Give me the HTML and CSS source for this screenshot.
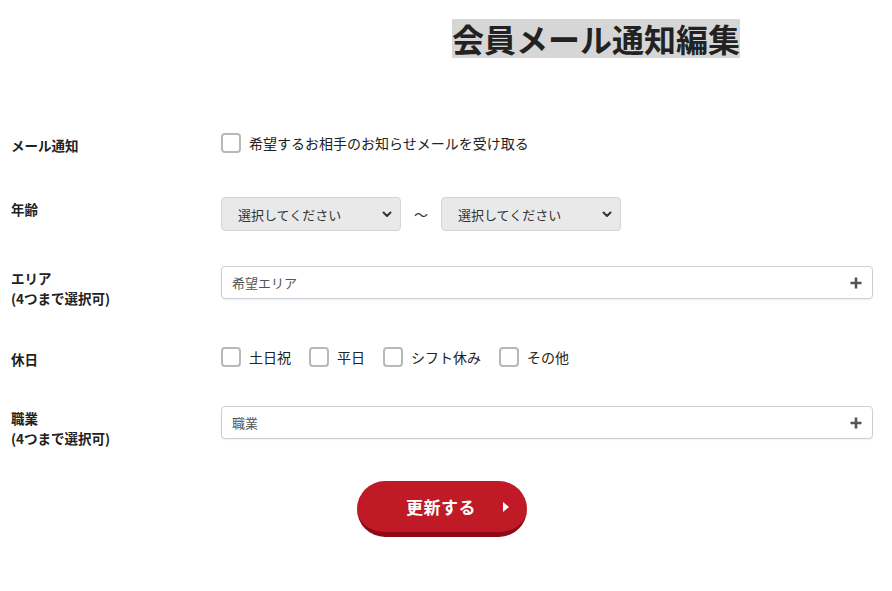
FILE: index.html
```html
<!DOCTYPE html>
<html lang="ja">
<head>
<meta charset="utf-8">
<title>会員メール通知編集</title>
<link rel="stylesheet" href="styles.css">
</head>
<body>
<div class="page">
  <header class="title-wrap">
    <h1 class="title">会員メール通知編集</h1>
  </header>

  <form class="form">
    <div class="row row-notice">
      <div class="label">メール通知</div>
      <div class="field">
        <label class="check"><span class="box"></span><span class="check-text">希望するお相手のお知らせメールを受け取る</span></label>
      </div>
    </div>

    <div class="row row-age">
      <div class="label">年齢</div>
      <div class="field field-age">
        <div class="select">
          <span>選択してください</span>
          <svg class="chev" width="10" height="7" viewBox="0 0 10 7"><path d="M1.5 1.5 L5 5 L8.5 1.5" fill="none" stroke="#333" stroke-width="2" stroke-linecap="round" stroke-linejoin="round"/></svg>
        </div>
        <span class="tilde">〜</span>
        <div class="select">
          <span>選択してください</span>
          <svg class="chev" width="10" height="7" viewBox="0 0 10 7"><path d="M1.5 1.5 L5 5 L8.5 1.5" fill="none" stroke="#333" stroke-width="2" stroke-linecap="round" stroke-linejoin="round"/></svg>
        </div>
      </div>
    </div>

    <div class="row row-area">
      <div class="label">エリア<br>(4つまで選択可)</div>
      <div class="field">
        <div class="picker">
          <span class="placeholder">希望エリア</span>
          <svg class="plus" width="12" height="12" viewBox="0 0 12 12"><path d="M6 0.5 V11.5 M0.5 6 H11.5" stroke="#555" stroke-width="2.6"/></svg>
        </div>
      </div>
    </div>

    <div class="row row-holiday">
      <div class="label">休日</div>
      <div class="field field-checks">
        <label class="check"><span class="box"></span><span class="check-text">土日祝</span></label>
        <label class="check"><span class="box"></span><span class="check-text">平日</span></label>
        <label class="check"><span class="box"></span><span class="check-text">シフト休み</span></label>
        <label class="check"><span class="box"></span><span class="check-text">その他</span></label>
      </div>
    </div>

    <div class="row row-job">
      <div class="label">職業<br>(4つまで選択可)</div>
      <div class="field">
        <div class="picker">
          <span class="placeholder">職業</span>
          <svg class="plus" width="12" height="12" viewBox="0 0 12 12"><path d="M6 0.5 V11.5 M0.5 6 H11.5" stroke="#555" stroke-width="2.6"/></svg>
        </div>
      </div>
    </div>

    <div class="actions">
      <button type="button" class="submit">
        <span class="submit-text">更新する</span>
        <svg class="arrow" width="6" height="10" viewBox="0 0 6 10"><path d="M0 0 L6 5 L0 10 Z" fill="#fff"/></svg>
      </button>
    </div>
  </form>
</div>
</body>
</html>
```
FILE: styles.css
```css
* { box-sizing: border-box; }

html, body {
  margin: 0;
  padding: 0;
  background: #fff;
}

body {
  font-family: "Noto Sans CJK JP", "Noto Sans", sans-serif;
  color: #222;
}

.page {
  width: 892px;
  padding: 0 19px 0 11px;
}

.title-wrap {
  padding-top: 19px;
  padding-left: 441px;
}

.title {
  display: inline-block;
  margin: 0;
  font-size: 32px;
  line-height: 39px;
  font-weight: 700;
  background: #d6d6d6;
  color: #222;
}

.form {
  margin-top: 75px;
  display: flex;
  flex-direction: column;
}

.row {
  display: grid;
  grid-template-columns: 210px 1fr;
  align-items: start;
}

.row-notice { margin-bottom: 42px; }
.row-age { margin-bottom: 35px; }
.row-area { margin-bottom: 39px; }
.row-holiday { margin-bottom: 37px; }
.row-job { margin-bottom: 33px; }

.label {
  padding-top: 2px;
  font-size: 13.5px;
  line-height: 20px;
  font-weight: 700;
  color: #222;
}

.field {
  display: flex;
  align-items: center;
}

.check {
  display: flex;
  align-items: center;
  gap: 8px;
  font-size: 14px;
  line-height: 20px;
  color: #222;
}

.box {
  width: 20px;
  height: 20px;
  border: 2px solid #b8b8b8;
  border-radius: 4px;
  background: #fff;
  flex: none;
}

.field-checks { gap: 18px; }

.field-age { gap: 0; }

.select {
  position: relative;
  width: 180px;
  height: 34px;
  background: #e9e9e9;
  border: 1px solid #d4d4d4;
  border-radius: 4px;
  padding-left: 16px;
  display: flex;
  align-items: center;
  font-size: 13px;
  color: #333;
}

.chev {
  position: absolute;
  right: 8px;
  top: 13px;
}

.tilde {
  width: 40px;
  text-align: center;
  font-size: 14px;
  color: #333;
}

.picker {
  flex: 1;
  height: 33px;
  border: 1px solid #cbd0d6;
  border-radius: 4px;
  background: #fff;
  display: flex;
  align-items: center;
  justify-content: space-between;
  padding: 0 10px;
  box-shadow: 0 1px 2px rgba(0,0,0,0.06);
}

.placeholder {
  font-size: 13px;
  color: #555;
}

.actions {
  display: flex;
  justify-content: center;
}

.submit {
  position: relative;
  width: 170px;
  height: 56px;
  border: none;
  border-bottom: 5px solid #8e0b16;
  border-radius: 28px;
  background: #c01a26;
  color: #fff;
  font-family: inherit;
  font-size: 17px;
  font-weight: 700;
  display: flex;
  align-items: center;
  justify-content: center;
  padding: 0;
  cursor: pointer;
}

.submit-text {
  margin-left: -2px;
  letter-spacing: 0.5px;
}

.arrow {
  position: absolute;
  right: 18px;
  top: 21px;
}
```
